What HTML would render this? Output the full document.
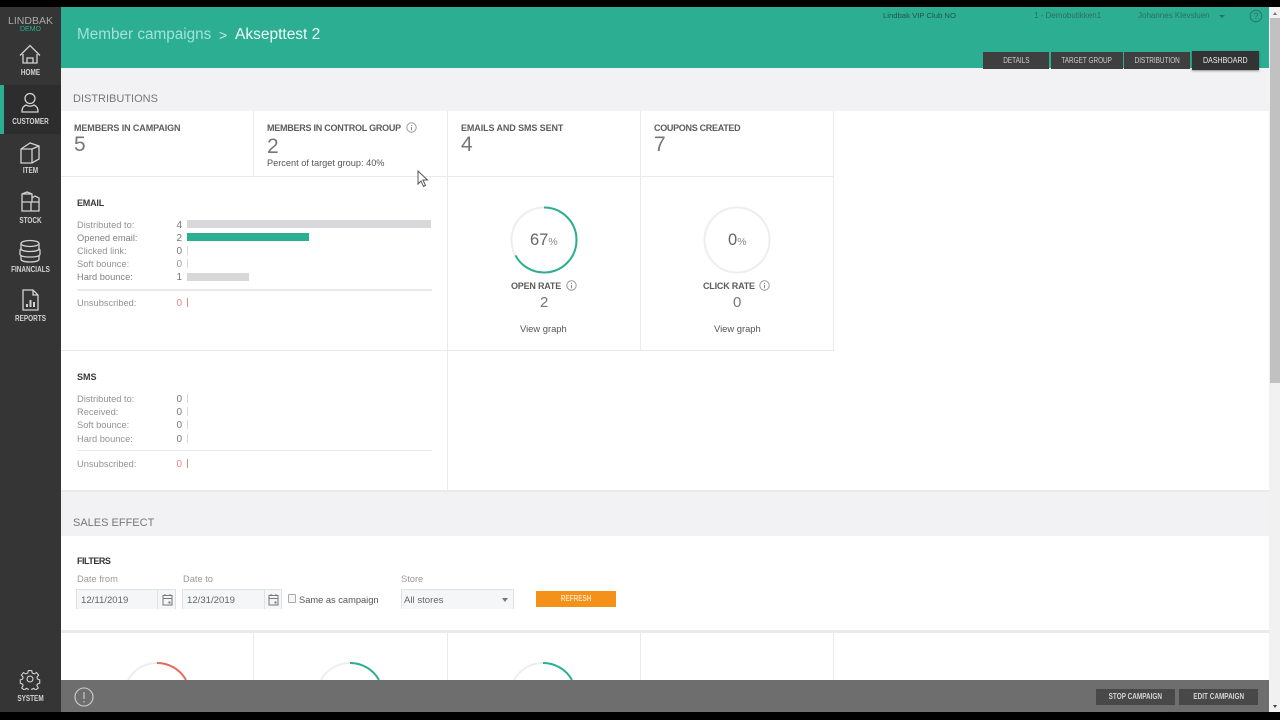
<!DOCTYPE html>
<html><head><meta charset="utf-8">
<style>
html,body{margin:0;padding:0;width:1280px;height:720px;overflow:hidden;background:#000}
*{box-sizing:border-box}
body{font-family:"Liberation Sans",sans-serif;position:relative}
.a{position:absolute;white-space:nowrap}
.line{position:absolute;background:#e9eaec}
.nav{position:absolute;left:0;width:61px;text-align:center;color:#d4d4d4;font-size:8px;font-weight:bold}
.nav svg{position:absolute;left:17px;top:0;width:26px;height:26px;fill:none;stroke:#d2d2d2;stroke-width:1.3}
.nav span{position:absolute;left:0;right:0;top:25px;transform:scaleX(.8)}
.h{font-size:9px;font-weight:bold;color:#5c5c5c;margin-top:1px}
.big{font-size:21px;color:#777;line-height:22px;margin-top:1px}
.l{font-size:9.300px;color:#929292;margin-top:1px}
.n{font-size:10px;color:#777;width:10px;text-align:right;margin-top:1px}
.bar{position:absolute;height:8px;background:#d8d8da}
.tick{position:absolute;width:1px;height:9px;background:#d8d8da}
.tab{position:absolute;top:52px;height:17px;background:#3f3f3f;color:#cfcfcf;font-size:8px;line-height:17px;text-align:center}
.tab span,.act span,.ref span{display:inline-block;transform:scaleX(.8)}
.sec{font-size:11px;color:#777;margin-top:1px}
.inp{position:absolute;top:589px;height:20px;background:#f5f6f8;border:1px solid #dfe1e4;border-bottom:none;font-size:9.600px;color:#666;line-height:21px;padding-left:4px}
.act{position:absolute;top:689px;height:16px;background:#484848;color:#d5d5d5;font-size:8px;font-weight:bold;line-height:16px;text-align:center}
</style></head><body>
<div class="a" style="left:61px;top:7px;width:1208px;height:705px;background:#fff"></div>
<div class="a" style="left:61px;top:68px;width:1208px;height:43px;background:#f2f2f4"></div>
<div class="a" style="left:61px;top:491px;width:1208px;height:45px;background:#f2f2f4"></div>
<div class="a" style="left:61px;top:7px;width:1208px;height:61px;background:#2bae92"></div>

<!-- Sidebar -->
<div class="a" style="left:0;top:7px;width:61px;height:705px;background:#353535"></div>
<div class="a" style="left:0;top:85px;width:61px;height:49px;background:#2d2d2d"></div>
<div class="a" style="left:0;top:85px;width:4px;height:49px;background:#2bae92"></div>
<div class="a" style="left:0;width:61px;top:15px;text-align:center;font-size:10.500px;color:#aaa;line-height:12px">LINDBAK</div>
<div class="a" style="left:0;width:61px;top:26px;text-align:center;font-size:7px;color:#2bae92;line-height:8px">DEMO</div>
<div class="nav" style="top:43px"><svg viewBox="0 0 26 26"><path d="M3 12.500L13 2.500l10 10M6 11v9h14v-9M10 20v-5h6v5"/></svg><span>HOME</span></div>
<div class="nav" style="top:92px"><svg viewBox="0 0 26 26"><circle cx="13" cy="6.500" r="5"/><path d="M5 20c0-4 1-5.500 4-7 2 1.500 6 1.500 8 0 3 1.500 4 3 4 7z"/></svg><span>CUSTOMER</span></div>
<div class="nav" style="top:141px"><svg viewBox="0 0 26 26"><path d="M4 8L13 2l9 3v13l-7 4H4zM4 8h11v14M15 8l7-3"/></svg><span>ITEM</span></div>
<div class="nav" style="top:190px"><svg viewBox="0 0 26 26"><path d="M5 4l5-2 5 2v8H5zM5 4h10M5 12v9h9v-9M14 12h8v9h-8M15 8l3-2 4 2v4"/></svg><span style="top:26px">STOCK</span></div>
<div class="nav" style="top:239px"><svg viewBox="0 0 26 26"><ellipse cx="13" cy="4.500" rx="9" ry="3"/><path d="M4 4.500v5c0 2 4 3 9 3s9-1 9-3v-5M4 9.500c-1 1-1 1.500-1 2.500v3c0 2 4 3 10 3s10-1 10-3v-3c0-1 0-1.500-1-2.500M4 17v3c0 2 4 3 9 3s9-1 9-3v-3"/></svg><span style="top:26px">FINANCIALS</span></div>
<div class="nav" style="top:288px"><svg viewBox="0 0 26 26"><path d="M6 2h10l5 5v15H6zM16 2v5h5"/><path d="M10 19v-3M13.500 19v-7M17 19v-5" stroke-width="2"/></svg><span style="top:26px">REPORTS</span></div>
<div class="nav" style="top:668px"><svg viewBox="0 0 26 26" style="left:19px;width:22px;height:22px"><path d="M11 3h4l.7 3 2.300 1 2.700-1.600 2.500 3-2 2.400.5 2.200 2.800 1v4l-2.800 1-.5 1.900 1.600 2.700-3 2.400-2.400-1.900-2.100.8-.8 2.500h-3l-.8-2.500-2.100-.8-2.400 1.900-3-2.400 1.600-2.700-.5-1.900-2.800-1v-4l2.800-1 .5-2.200-2-2.400 2.500-3L8 7l2.300-1z"/><circle cx="13" cy="13" r="3.500"/></svg><span style="top:26px">SYSTEM</span></div>

<!-- Header -->
<div class="a" style="left:77px;top:25px;font-size:15.300px;color:#a3e3d6;line-height:20px">Member campaigns</div>
<div class="a" style="left:219px;top:25px;font-size:14px;color:#c5efe6;line-height:20px">&gt;</div>
<div class="a" style="left:235px;top:25px;font-size:15.500px;color:#eefaf7;line-height:20px">Aksepttest 2</div>
<div class="a" style="left:883px;top:11px;font-size:7.700px;color:#24574c;line-height:10px">Lindbak VIP Club NO</div>
<div class="a" style="left:1034px;top:11px;font-size:8px;color:#2f6f60;line-height:10px">1 - Demobutikken1</div>
<div class="a" style="left:1138px;top:11px;font-size:8px;color:#2f6f60;line-height:10px">Johannes Klevsluen</div>
<div class="a" style="left:1219px;top:15px;width:0;height:0;border:3px solid transparent;border-top:3px solid #2f6f60"></div>
<svg class="a" style="left:1249px;top:9px" width="14" height="14" viewBox="0 0 14 14"><circle cx="7" cy="7" r="5.800" fill="none" stroke="#2f7565"/><text x="7" y="10" font-size="9" text-anchor="middle" fill="#2f7565" font-family="Liberation Sans">?</text></svg>
<div class="tab" style="left:983px;width:66px"><span>DETAILS</span></div>
<div class="tab" style="left:1051px;width:72px"><span>TARGET GROUP</span></div>
<div class="tab" style="left:1124px;width:66px"><span>DISTRIBUTION</span></div>
<div class="tab" style="left:1192px;width:67px;top:51px;height:19px;line-height:19px;background:#333;color:#eee;box-shadow:0 1px 2px rgba(0,0,0,.4)"><span style="transform:scaleX(.88)">DASHBOARD</span></div>

<!-- Distributions -->
<div class="a sec" style="left:73px;top:92px">DISTRIBUTIONS</div>
<div class="line" style="left:61px;top:176px;width:773px;height:1px"></div>
<div class="line" style="left:253px;top:111px;width:1px;height:65px"></div>
<div class="line" style="left:447px;top:111px;width:1px;height:380px"></div>
<div class="line" style="left:640px;top:111px;width:1px;height:239px"></div>
<div class="line" style="left:833px;top:111px;width:1px;height:239px"></div>
<div class="line" style="left:61px;top:350px;width:773px;height:1px"></div>
<div class="line" style="left:61px;top:490px;width:1208px;height:2px"></div>

<div class="a h" style="left:74px;top:122px;letter-spacing:-.1px">MEMBERS IN CAMPAIGN</div>
<div class="a big" style="left:74px;top:133px">5</div>
<div class="a h" style="left:267px;top:122px;letter-spacing:-.25px">MEMBERS IN CONTROL GROUP</div>
<svg class="a" style="left:406px;top:122px" width="11" height="11" viewBox="0 0 11 11"><circle cx="5.500" cy="5.500" r="4.700" fill="none" stroke="#999"/><path d="M5.500 3v1M5.500 5v3.200" stroke="#888"/></svg>
<div class="a big" style="left:267px;top:135px">2</div>
<div class="a" style="left:267px;top:158px;font-size:9.200px;color:#555">Percent of target group: 40%</div>
<div class="a h" style="left:461px;top:122px;letter-spacing:-.1px">EMAILS AND SMS SENT</div>
<div class="a big" style="left:461px;top:133px">4</div>
<div class="a h" style="left:654px;top:122px;letter-spacing:-.3px">COUPONS CREATED</div>
<div class="a big" style="left:654px;top:133px">7</div>

<!-- Email -->
<div class="a h" style="left:77px;top:197px;color:#3a3a3a;letter-spacing:-.2px">EMAIL</div>
<div class="a l" style="left:77px;top:219px">Distributed to:</div><div class="a n" style="left:172px;top:219px">4</div><div class="bar" style="left:187px;top:220px;width:244px"></div>
<div class="a l" style="left:77px;top:232px;color:#808080">Opened email:</div><div class="a n" style="left:172px;top:232px">2</div><div class="bar" style="left:187px;top:233px;width:122px;background:#2bae92"></div>
<div class="a l" style="left:77px;top:245px">Clicked link:</div><div class="a n" style="left:172px;top:245px">0</div><div class="tick" style="left:187px;top:246px"></div>
<div class="a l" style="left:77px;top:258px">Soft bounce:</div><div class="a n" style="left:172px;top:258px;color:#999">0</div><div class="tick" style="left:187px;top:259px"></div>
<div class="a l" style="left:77px;top:271px;color:#808080">Hard bounce:</div><div class="a n" style="left:172px;top:271px">1</div><div class="bar" style="left:187px;top:273px;width:62px"></div>
<div class="line" style="left:77px;top:289px;width:355px;height:2px"></div>
<div class="a l" style="left:77px;top:297px">Unsubscribed:</div><div class="a n" style="left:172px;top:297px;color:#e58a84">0</div><div class="tick" style="left:187px;top:298px;background:#e58a84"></div>

<!-- SMS -->
<div class="a h" style="left:77px;top:371px;color:#3a3a3a">SMS</div>
<div class="a l" style="left:77px;top:393px">Distributed to:</div><div class="a n" style="left:172px;top:393px">0</div><div class="tick" style="left:187px;top:394px"></div>
<div class="a l" style="left:77px;top:406px">Received:</div><div class="a n" style="left:172px;top:406px">0</div><div class="tick" style="left:187px;top:407px"></div>
<div class="a l" style="left:77px;top:419px">Soft bounce:</div><div class="a n" style="left:172px;top:419px">0</div><div class="tick" style="left:187px;top:420px"></div>
<div class="a l" style="left:77px;top:433px">Hard bounce:</div><div class="a n" style="left:172px;top:433px">0</div><div class="tick" style="left:187px;top:434px"></div>
<div class="line" style="left:77px;top:450px;width:355px;height:1px"></div>
<div class="a l" style="left:77px;top:458px">Unsubscribed:</div><div class="a n" style="left:172px;top:458px;color:#e58a84">0</div><div class="tick" style="left:187px;top:459px;background:#e58a84"></div>

<!-- Rates -->
<svg class="a" style="left:505px;top:201px" width="78" height="78" viewBox="0 0 78 78">
<circle cx="39" cy="39" r="32.500" fill="none" stroke="#eeeef1" stroke-width="2"/>
<circle cx="39" cy="39" r="32.500" fill="none" stroke="#2bae92" stroke-width="2" stroke-dasharray="136.800 204.200" transform="rotate(-90 39 39)"/>
</svg>
<div class="a" style="left:530px;top:231px;font-size:16.500px;color:#666;line-height:18px">67<span style="font-size:10.500px;color:#888">%</span></div>
<svg class="a" style="left:698px;top:201px" width="78" height="78" viewBox="0 0 78 78"><circle cx="39" cy="39" r="32.500" fill="none" stroke="#eeeef1" stroke-width="2"/></svg>
<div class="a" style="left:728px;top:231px;font-size:16.500px;color:#666;line-height:18px">0<span style="font-size:10.500px;color:#888">%</span></div>
<div class="a h" style="left:511px;top:280px;letter-spacing:-.2px">OPEN RATE</div>
<svg class="a" style="left:566px;top:280px" width="11" height="11" viewBox="0 0 11 11"><circle cx="5.500" cy="5.500" r="4.700" fill="none" stroke="#999"/><path d="M5.500 3v1M5.500 5v3.200" stroke="#888"/></svg>
<div class="a h" style="left:703px;top:280px;letter-spacing:-.2px">CLICK RATE</div>
<svg class="a" style="left:759px;top:280px" width="11" height="11" viewBox="0 0 11 11"><circle cx="5.500" cy="5.500" r="4.700" fill="none" stroke="#999"/><path d="M5.500 3v1M5.500 5v3.200" stroke="#888"/></svg>
<div class="a" style="left:540px;top:294px;font-size:15px;color:#777;line-height:18px">2</div>
<div class="a" style="left:733px;top:294px;font-size:15px;color:#777;line-height:18px">0</div>
<div class="a" style="left:520px;top:323px;font-size:9.400px;color:#555">View graph</div>
<div class="a" style="left:714px;top:323px;font-size:9.400px;color:#555">View graph</div>

<!-- Sales effect -->
<div class="a sec" style="left:73px;top:516px">SALES EFFECT</div>
<div class="a h" style="left:77px;top:555px;color:#333;letter-spacing:-.5px">FILTERS</div>
<div class="a l" style="left:77px;top:573px;color:#999">Date from</div>
<div class="a l" style="left:183px;top:573px;color:#999">Date to</div>
<div class="a l" style="left:401px;top:573px;color:#999">Store</div>
<div class="inp" style="left:76px;width:100px">12/11/2019</div>
<div class="line" style="left:157px;top:589px;width:1px;height:20px;background:#dfe1e4"></div>
<div class="inp" style="left:182px;width:100px">12/31/2019</div>
<div class="line" style="left:264px;top:589px;width:1px;height:20px;background:#dfe1e4"></div>
<svg class="a" style="left:162px;top:593px" width="11" height="13" viewBox="0 0 11 13"><path d="M1 2.500h9v9.500H1zM1 5.500h9M3 1v2M8 1v2" fill="none" stroke="#777"/><rect x="6.500" y="8.500" width="2" height="2" fill="#777"/></svg>
<svg class="a" style="left:268px;top:593px" width="11" height="13" viewBox="0 0 11 13"><path d="M1 2.500h9v9.500H1zM1 5.500h9M3 1v2M8 1v2" fill="none" stroke="#777"/><rect x="6.500" y="8.500" width="2" height="2" fill="#777"/></svg>
<div class="a" style="left:288px;top:594px;width:8px;height:9px;border:1px solid #aaa;border-radius:1px;background:#f5f5f5"></div>
<div class="a" style="left:299px;top:595px;font-size:9.300px;color:#555">Same as campaign</div>
<div class="inp" style="left:401px;width:113px;padding-left:2px">All stores</div>
<div class="a" style="left:502px;top:598px;width:0;height:0;border:3px solid transparent;border-top:4px solid #777"></div>
<div class="a ref" style="left:536px;top:591px;width:80px;height:16px;background:#f39118;color:#fbe3c5;font-size:8px;font-weight:bold;line-height:16px;text-align:center"><span>REFRESH</span></div>
<div class="line" style="left:61px;top:630px;width:1208px;height:3px"></div>
<div class="line" style="left:253px;top:633px;width:1px;height:47px"></div>
<div class="line" style="left:447px;top:633px;width:1px;height:47px"></div>
<div class="line" style="left:640px;top:633px;width:1px;height:47px"></div>
<div class="line" style="left:833px;top:633px;width:1px;height:47px"></div>
<svg class="a" style="left:100px;top:655px" width="500" height="25" viewBox="0 0 500 25" fill="none" stroke-width="2">
<path d="M28 25A33 33 0 0 1 57 8" stroke="#eeeef1"/><path d="M57 8A33 33 0 0 1 86 25" stroke="#e8695c"/>
<path d="M221 25A33 33 0 0 1 250 8" stroke="#eeeef1"/><path d="M250 8A33 33 0 0 1 279 25" stroke="#2bae92"/>
<path d="M414 25A33 33 0 0 1 443 8" stroke="#eeeef1"/><path d="M443 8A33 33 0 0 1 472 25" stroke="#2bae92"/>
</svg>

<!-- Bottom bar -->
<div class="a" style="left:61px;top:680px;width:1208px;height:32px;background:#6e6e6e"></div>
<svg class="a" style="left:74px;top:687px" width="20" height="20" viewBox="0 0 20 20"><circle cx="10" cy="10" r="9" fill="none" stroke="#cfcfcf" stroke-width="1.100"/><path d="M10 5v7M10 14v1.500" stroke="#cfcfcf" stroke-width="1.100"/></svg>
<div class="act" style="left:1096px;width:79px"><span>STOP CAMPAIGN</span></div>
<div class="act" style="left:1179px;width:79px"><span>EDIT CAMPAIGN</span></div>

<!-- Scrollbar -->
<div class="a" style="left:1269px;top:7px;width:11px;height:705px;background:#f1f1f1"></div>
<div class="a" style="left:1270px;top:18px;width:10px;height:365px;background:#c1c1c1"></div>
<div class="a" style="left:1273px;top:12px;width:0;height:0;border:2px solid transparent;border-bottom:3px solid #777;border-top:none"></div>
<div class="a" style="left:1273px;top:705px;width:0;height:0;border:2px solid transparent;border-top:3px solid #444;border-bottom:none"></div>

<!-- Cursor -->
<svg class="a" style="left:417px;top:170px" width="12" height="18" viewBox="0 0 12 18"><path d="M1 1v13l3-3 2.500 5.500 2-1L6 10h4.500z" fill="#fff" stroke="#555"/></svg>
</body></html>
